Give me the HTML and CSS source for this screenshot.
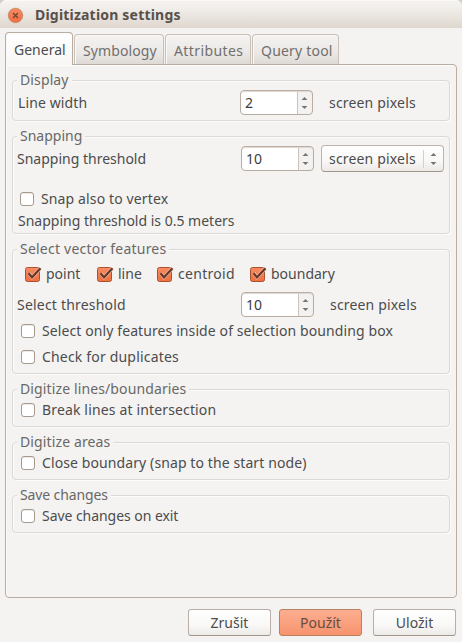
FILE: index.html
```html
<!DOCTYPE html>
<html lang="en">
<head>
<meta charset="utf-8">
<title>Digitization settings</title>
<link rel="stylesheet" href="styles.css">
</head>
<body>
<svg class="defs" width="0" height="0" aria-hidden="true">
  <defs>
    <linearGradient id="orange" x1="0" y1="0" x2="0" y2="1"><stop offset="0" stop-color="#f78b63"/><stop offset="1" stop-color="#ef6f40"/></linearGradient>
    <symbol id="arrows" viewBox="0 0 7 14"><path d="M.6 4 3.500 .9 6.400 4zM.6 10 3.500 13.100 6.400 10z" fill="#77736f"/></symbol>
    <symbol id="checked" viewBox="0 0 17 17"><rect x=".5" y="1.500" width="14" height="14" rx="2" fill="url(#orange)" stroke="#a9522f"/><path d="M3.800 7.200 7 11.200 15.300 2.500" fill="none" stroke="#fbb79c" stroke-width="3.600"/><path d="M3.500 7.300 7 11.300 15.500 2.200" fill="none" stroke="#633a2b" stroke-width="2.200"/></symbol>
  </defs>
</svg>
<div class="window">
  <header class="titlebar">
    <svg class="close" viewBox="0 0 17 17"><circle cx="8.500" cy="8.500" r="8" fill="#d9cec5"/><circle cx="8.500" cy="8.500" r="7" fill="url(#orange)" stroke="#cf7352" stroke-width=".7"/><path d="m6 6 5 5m0-5-5 5" stroke="#65402f" stroke-width="1.100"/></svg>
    <h1 class="t-title">Digitization settings</h1>
  </header>
  <nav class="tabs">
    <div class="tab active"><span class="t-general">General</span></div>
    <div class="tab symbology"><span class="t-symbology">Symbology</span></div>
    <div class="tab attributes"><span class="t-attributes">Attributes</span></div>
    <div class="tab query"><span class="t-query">Query tool</span></div>
  </nav>
  <main class="panel">
    <section class="group display">
      <h2><span class="t-display">Display</span></h2>
      <div class="row first"><span class="label t-linewidth">Line width</span><div class="spin"><span>2</span><svg><use href="#arrows"/></svg></div><span class="unit t-screen">screen pixels</span></div>
    </section>
    <section class="group snapping">
      <h2><span class="t-snapping">Snapping</span></h2>
      <div class="row"><span class="label t-snapthr">Snapping threshold</span><div class="spin"><span>10</span><svg><use href="#arrows"/></svg></div><div class="select"><span class="t-screen">screen pixels</span><svg><use href="#arrows"/></svg></div></div>
      <div class="check snap"><i></i><span class="t-vertex">Snap also to vertex</span></div>
      <p><span class="t-meters">Snapping threshold is 0.5 meters</span></p>
    </section>
    <section class="group vector">
      <h2><span class="t-vector">Select vector features</span></h2>
      <div class="features">
        <div><svg><use href="#checked"/></svg><span class="t-point">point</span></div>
        <div><svg><use href="#checked"/></svg><span class="t-line">line</span></div>
        <div><svg><use href="#checked"/></svg><span class="t-centroid">centroid</span></div>
        <div><svg><use href="#checked"/></svg><span class="t-boundary">boundary</span></div>
      </div>
      <div class="row"><span class="label t-selthr">Select threshold</span><div class="spin"><span>10</span><svg><use href="#arrows"/></svg></div><span class="unit t-screen">screen pixels</span></div>
      <div class="check inside"><i></i><span class="t-inside">Select only features inside of selection bounding box</span></div>
      <div class="check dup"><i></i><span class="t-dup">Check for duplicates</span></div>
    </section>
    <section class="group small">
      <h2><span class="t-lines">Digitize lines/boundaries</span></h2>
      <div class="check"><i></i><span class="t-break">Break lines at intersection</span></div>
    </section>
    <section class="group small">
      <h2><span class="t-areas">Digitize areas</span></h2>
      <div class="check"><i></i><span class="t-close">Close boundary (snap to the start node)</span></div>
    </section>
    <section class="group small">
      <h2><span class="t-save">Save changes</span></h2>
      <div class="check"><i></i><span class="t-exit">Save changes on exit</span></div>
    </section>
  </main>
  <footer class="actions">
    <button>Zrušit</button>
    <button class="primary">Použít</button>
    <button class="last">Uložit</button>
  </footer>
</div>
</body>
</html>
```
FILE: styles.css
```css
* { box-sizing: border-box; }
body { margin: 0; background: #cfcbc8; font: 14px/20px "Noto Sans", "Open Sans", sans-serif; color: #4c4c4c; }
h1, h2, p { margin: 0; }
svg { display: block; }
.defs { position: absolute; }
.window { width: 462px; height: 642px; background: #f4f3f2; border-radius: 6px 6px 0 0; overflow: hidden; white-space: nowrap; }
.titlebar { height: 28px; display: flex; align-items: center; padding: 1px 0 0 7px; background: linear-gradient(#f5f3f1, #efebe7 35%, #dfd7cf); border-top: 1px solid #faf9f7; }
.close { width: 17px; height: 17px; margin-right: 11px; }
.titlebar h1 { font-size: 14px; font-weight: 700; color: #58514b; }
.tabs { display: flex; align-items: flex-end; height: 37px; padding-left: 5px; margin-bottom: -1px; position: relative; }
.tab { height: 30px; margin-bottom: 1px; border: 1px solid #c9c0b8; border-bottom: 0; border-radius: 4px 4px 0 0; background: linear-gradient(#f5f3f2, #ebe8e5 60%, #dfdad6); color: #716f6e; padding: 6px 0 0 8px; box-shadow: inset 1px 1px #faf9f8; }
.tab.active { width: 68px; height: 33px; margin: 0 1px 0 0; background: linear-gradient(#fff, #f8f7f6); border-color: #b9aca0; color: #4c4c4c; padding-top: 7px; }
.symbology { width: 90px; margin-right: 1px; }
.attributes { width: 86px; margin-right: 1px; }
.query { width: 87px; }
.panel { width: 452px; height: 534px; margin-left: 5px; border: 1px solid #b9aca0; border-radius: 0 4px 4px 4px; padding: 15px 6px 0; box-shadow: inset 1px 1px #fcfcfb; }
.group { border: 1px solid #dcd8d3; border-radius: 4px; margin-bottom: 15px; box-shadow: inset 1px 1px #fbfbfa, 1px 1px #fbfbfa; }
.group h2 { font-size: 14px; font-weight: 400; line-height: 20px; width: max-content; height: 20px; margin: -11px 0 0 4px; padding: 0 3px; background: #f4f3f2; color: #696866; }
.display { height: 41px; }
.snapping { height: 98px; }
.vector { height: 125px; }
.small { height: 38px; }
.row { display: flex; align-items: center; height: 27px; padding-left: 4px; }
.row.first { padding-left: 5px; }
.label { width: 224px; flex: none; }
.first .label { width: 222px; }
.spin { width: 73px; height: 25px; flex: none; display: flex; align-items: center; border: 1px solid #b9aca0; border-radius: 4px; background: linear-gradient(90deg, #fff 56px, #cbc4bd 56px 57px, #f4f2f0 57px); padding-left: 4px; color: #3c3c3c; box-shadow: inset 0 1px 1px #ded9d5; }
.spin span { flex: 1; }
.spin svg { width: 7px; height: 14px; margin-right: 4px; }
.unit { margin-left: 16px; }
.select { width: 123px; height: 27px; margin-left: 7px; flex: none; display: flex; align-items: center; justify-content: space-between; border: 1px solid #bdb4ac; border-bottom-color: #a0958b; border-radius: 4px; padding: 0 6px 0 7px; background: linear-gradient(#fff, #f9f8f7 60%, #ece9e6); }
.select svg { box-sizing: content-box; width: 7px; height: 14px; padding: 2px 0 2px 6px; border-left: 1px solid #d5d0cb; }
.check { display: flex; align-items: center; height: 20px; padding-left: 8px; }
.check i { width: 14px; height: 14px; flex: none; margin-right: 7px; border: 1px solid #a69a8f; border-radius: 3px; background: #fff; box-shadow: inset 0 1px #eeebe8; }
.snap { padding-left: 7px; margin-top: 17px; }
.snapping .row, .display .row { margin-top: -1px; }
.snapping p { padding-left: 5px; margin-top: 2px; }
.features { display: grid; grid-template-columns: 72px 60px 93px 100px; margin: 5px 0 0 12px; height: 20px; }
.features div { display: flex; align-items: center; }
.features svg { width: 17px; height: 17px; margin-right: 4px; }
.vector .row { margin-top: 7px; }
.vector .inside { margin-top: 3px; }
.dup { margin-top: 6px; }
.small .check { margin-top: 1px; }
.actions { display: flex; padding: 11px 0 0 188px; }
.actions button { width: 83px; height: 27px; margin-right: 8px; padding: 0; font: inherit; color: #4c4c4c; border: 1px solid #b7afa8; border-bottom-color: #a0958b; border-radius: 3px; background: linear-gradient(#fff, #f9f8f7 60%, #edebe8); }
.actions .primary { margin-right: 11px; background: linear-gradient(#fcae90, #f7936d); border-color: #b9805f; color: #694b40; }
.actions .last { margin-right: 0; }

/* Tracking per label */
.t-title { letter-spacing: .2px; }
.t-symbology { letter-spacing: .1px; }
.t-attributes { letter-spacing: .4px; }
.t-query { letter-spacing: .2px; }
.t-display, .t-linewidth, .t-areas { letter-spacing: .12px; }
.t-screen { letter-spacing: .17px; }
.t-vertex { letter-spacing: .13px; }
.t-vector { letter-spacing: .22px; }
.t-centroid { letter-spacing: .3px; }
.t-selthr { letter-spacing: .2px; }
.t-inside, .t-close { letter-spacing: .1px; }
.t-dup { letter-spacing: .18px; }
.t-lines { letter-spacing: .12px; }
.t-break { letter-spacing: .15px; }
.t-save { letter-spacing: -.12px; }
.t-exit { letter-spacing: -.05px; }
```
